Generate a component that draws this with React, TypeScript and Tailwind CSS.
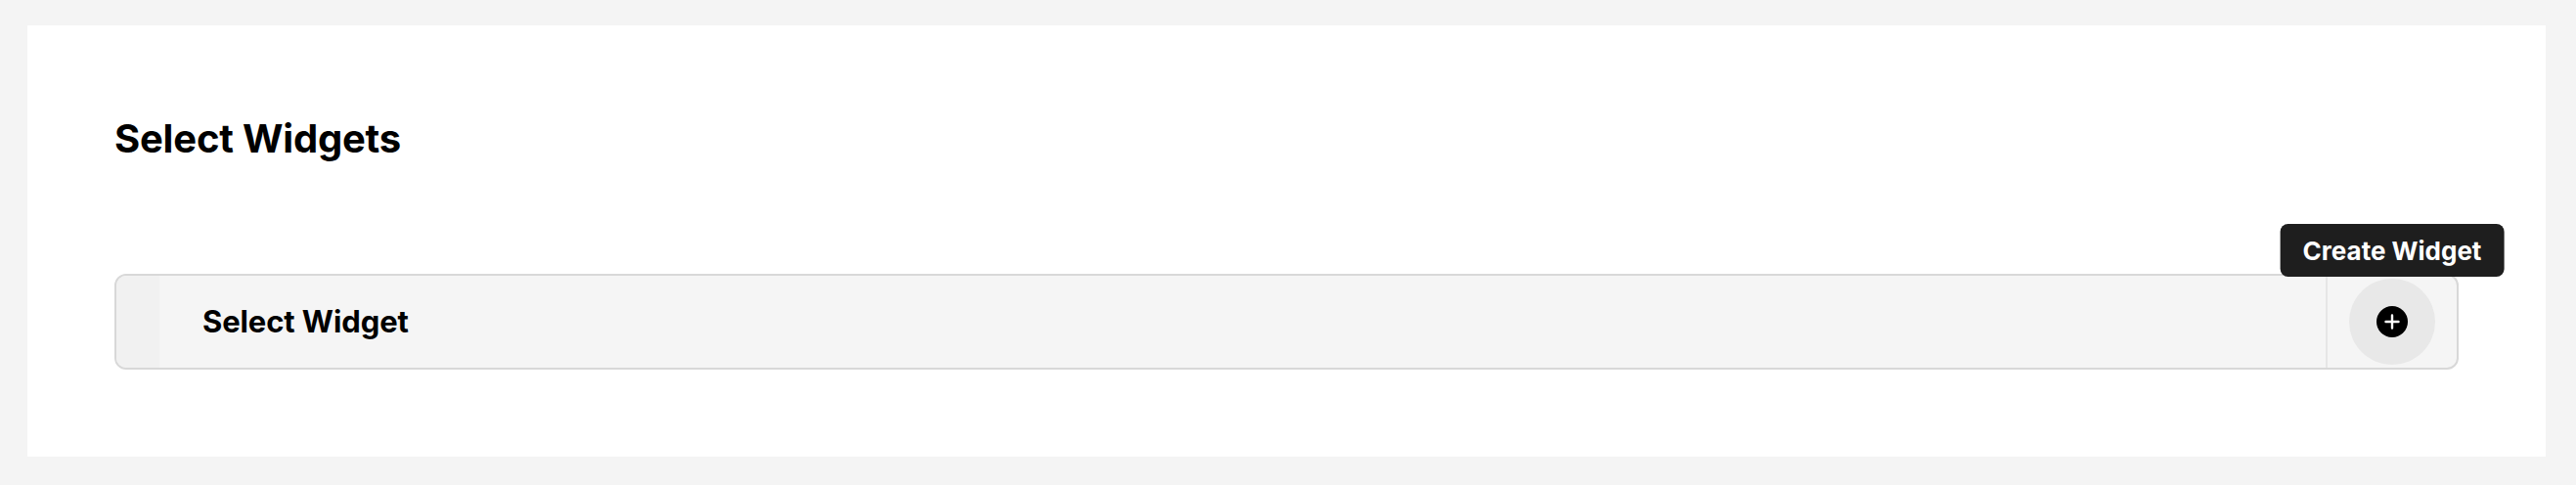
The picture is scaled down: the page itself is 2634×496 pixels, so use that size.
import React from "react";

export default function App() {
  return (
    <div
      className="w-full h-[496px] bg-[#f4f4f4] pl-[28px] pr-[31px] pt-[26px] pb-[29px]"
      style={{ fontFamily: "Inter, 'Noto Sans', sans-serif" }}
    >
      <div className="bg-white h-full px-[89px] pt-[92px]">
        <h1 className="text-[40px] leading-[48px] font-bold text-black tracking-[-0.2px]">
          Select Widgets
        </h1>
        <div className="mt-[114px] h-[98px] flex border-2 border-[#d8d8d8] rounded-[12px] bg-[#f5f5f5]">
          <div className="w-[44px] bg-[#f1f1f1] rounded-l-[10px]" />
          <div className="flex-1 flex items-center pl-[44px]">
            <span className="text-[31px] font-bold text-black tracking-[-0.1px]">Select Widget</span>
          </div>
          <div className="relative w-[134px] border-l-2 border-[#e6e6e6] flex items-center justify-center">
            <div className="absolute bottom-full left-1/2 -translate-x-1/2 mb-[-1px] h-[54px] px-[23px] flex items-center rounded-[8px] bg-[#1e1e1e] whitespace-nowrap">
              <span className="text-[26px] font-bold text-white">Create Widget</span>
            </div>
            <div className="w-[88px] h-[88px] rounded-full bg-[#e8e8e8] flex items-center justify-center">
              <svg width="32" height="32" viewBox="0 0 32 32">
                <circle cx="16" cy="16" r="16" fill="#000" />
                <path d="M16 9.5v13M9.5 16h13" stroke="#fff" strokeWidth="2.4" strokeLinecap="round" />
              </svg>
            </div>
          </div>
        </div>
      </div>
    </div>
  );
}
